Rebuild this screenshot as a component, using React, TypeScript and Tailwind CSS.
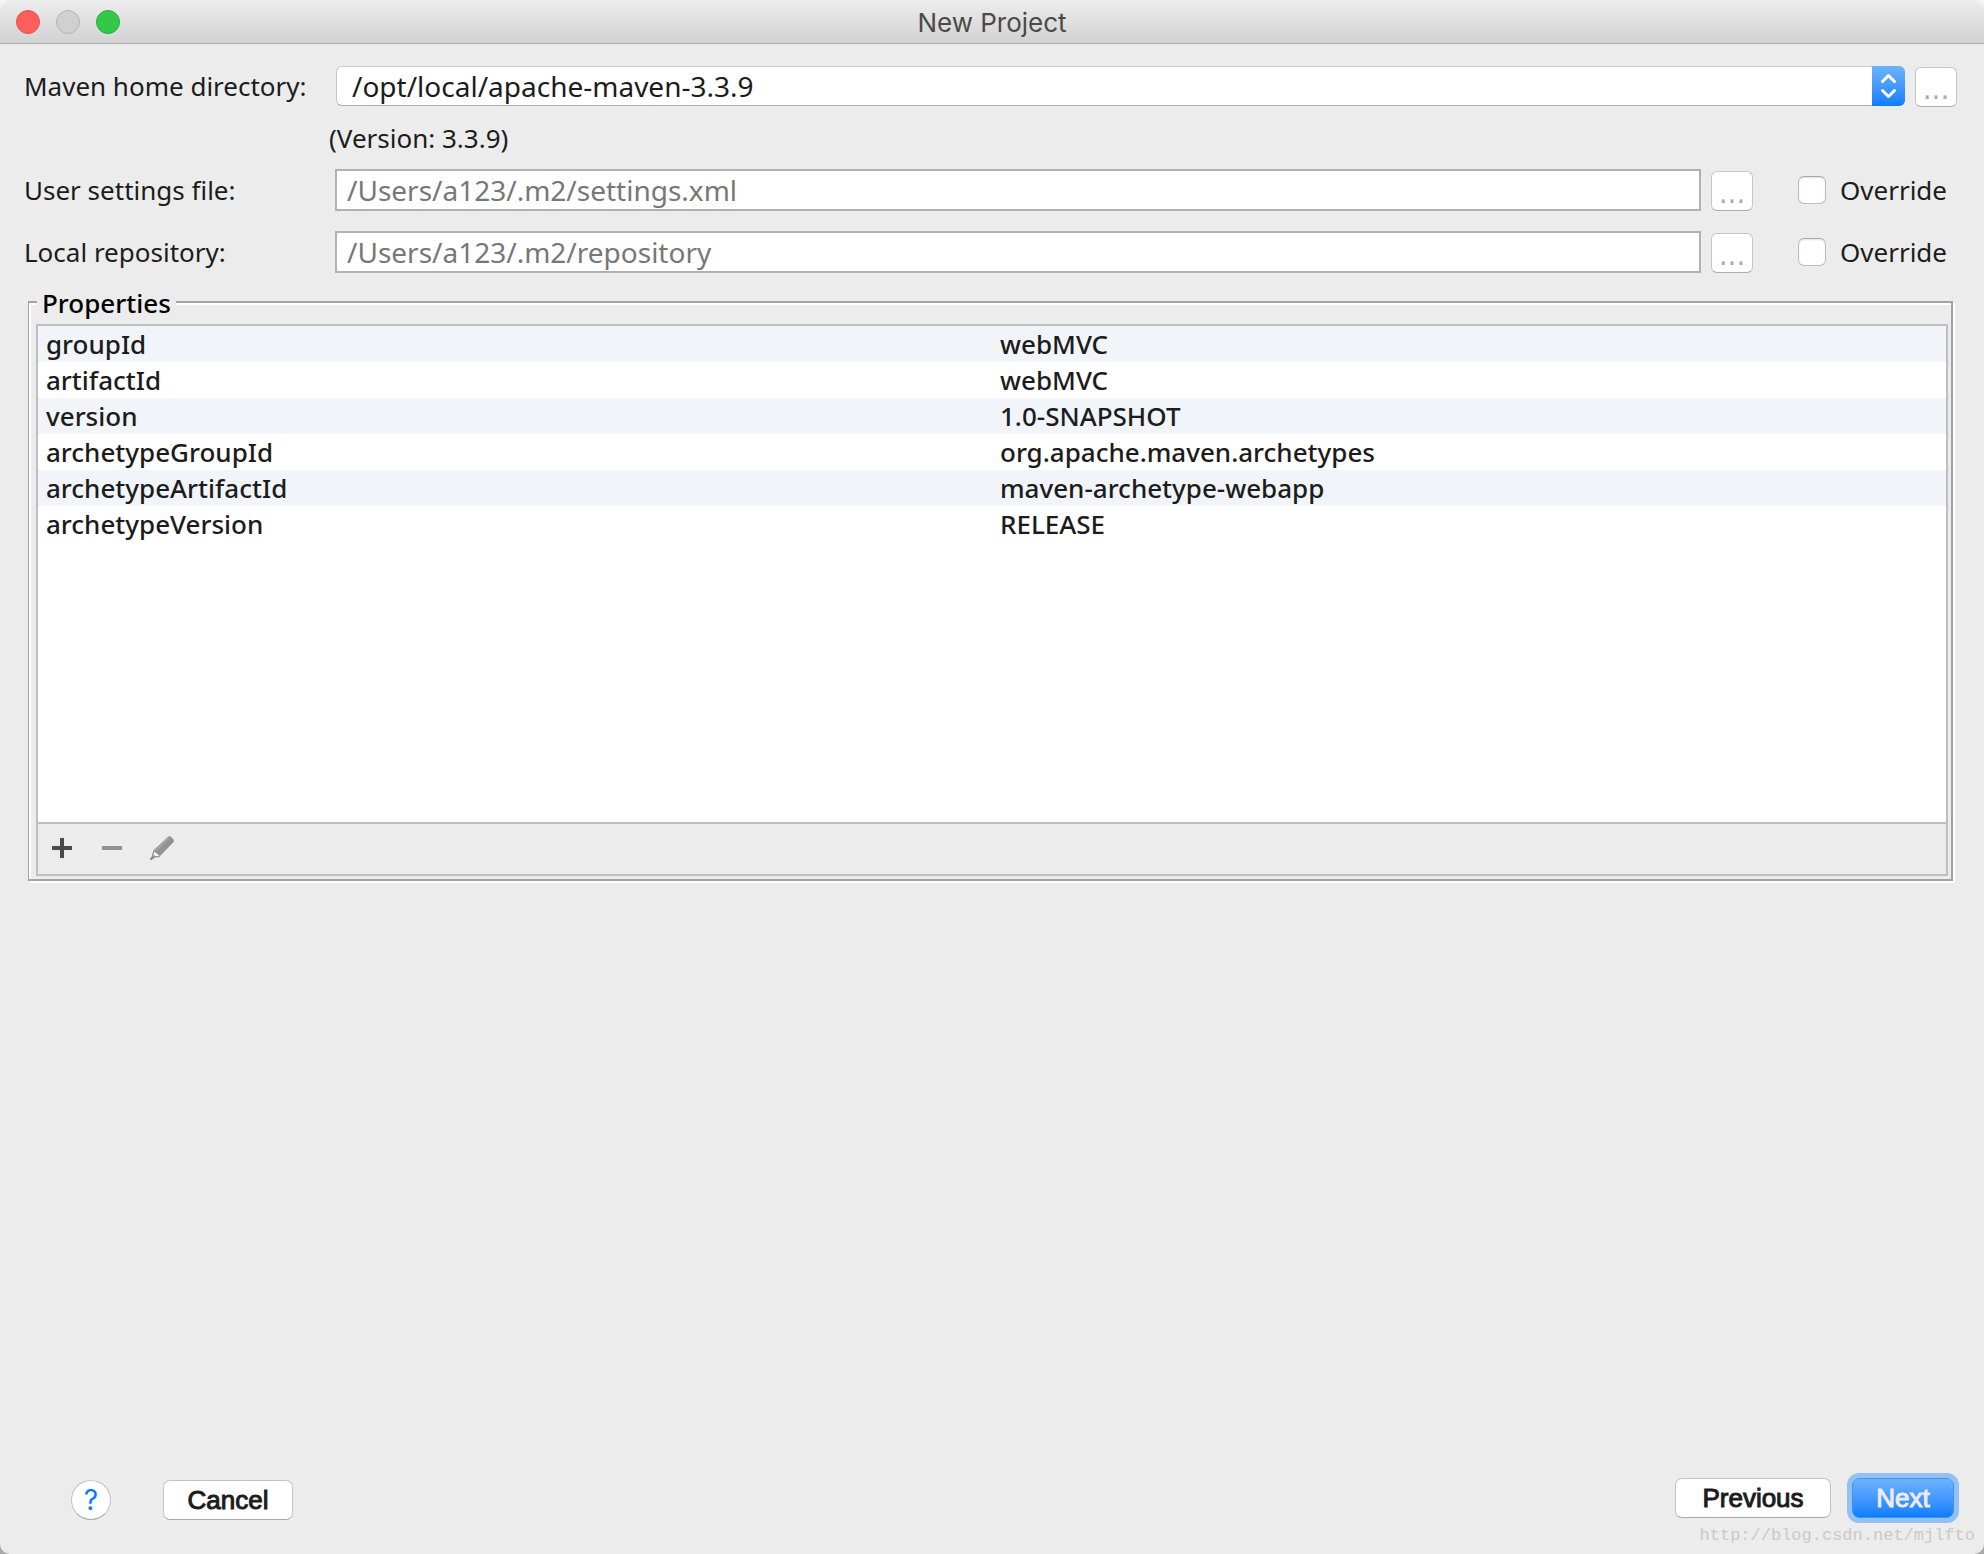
import React from "react";

const properties = [
  { name: "groupId", value: "webMVC" },
  { name: "artifactId", value: "webMVC" },
  { name: "version", value: "1.0-SNAPSHOT" },
  { name: "archetypeGroupId", value: "org.apache.maven.archetypes" },
  { name: "archetypeArtifactId", value: "maven-archetype-webapp" },
  { name: "archetypeVersion", value: "RELEASE" },
];

function TitleBar() {
  return (
    <header className="relative flex h-11 items-center border-b border-[#adadad] bg-linear-to-b from-[#ededed] to-[#d2d2d2] px-4">
      <div className="flex gap-4">
        <button aria-label="Close" className="size-6 rounded-full border border-[#e9504c] bg-[#fd605c]" />
        <button aria-label="Minimize" disabled className="size-6 rounded-full border border-[#b4b4b4] bg-[#d0d0d0]" />
        <button aria-label="Zoom" className="size-6 rounded-full border border-[#27ae38] bg-[#34c84a]" />
      </div>
      <h1 className="pointer-events-none absolute inset-0 flex items-center justify-center pt-0.5 font-['Inter',sans-serif] text-[26px] text-[#4a4a4a]">
        New Project
      </h1>
    </header>
  );
}

function BrowseButton({ label }: { label: string }) {
  return (
    <button
      aria-label={label}
      className="ml-[10px] flex h-10 w-[42px] shrink-0 items-center justify-center self-end rounded-[6px] border border-[#c6c6c6] border-b-[#adadad] bg-white pt-1.5 font-['DejaVu_Sans',sans-serif] text-[28px] leading-none text-[#ababab]"
    >
      ...
    </button>
  );
}

function PathRow({ id, label, value }: { id: string; label: string; value: string }) {
  return (
    <div className="flex h-[42px] items-center">
      <label htmlFor={id} className="w-[311px] shrink-0">
        {label}
      </label>
      <input
        id={id}
        type="text"
        readOnly
        defaultValue={value}
        className="h-[42px] min-w-0 flex-1 border-2 border-[#b1b1b1] bg-white px-[10px] text-[28px] text-[#777777] outline-none"
      />
      <BrowseButton label={`Browse ${label}`} />
      <label className="ml-[45px] flex w-[159px] shrink-0 items-center gap-3.5">
        <input
          type="checkbox"
          className="size-7 appearance-none rounded-[6px] border border-[#bdbdbd] border-t-[#a8a8a8] bg-white shadow-[inset_0_1px_2px_#e2e2e2]"
        />
        Override
      </label>
    </div>
  );
}

function ComboArrows() {
  return (
    <svg viewBox="0 0 33 40" className="h-10 w-[33px]" fill="none" stroke="#fff" strokeWidth="3" strokeLinecap="round" strokeLinejoin="round">
      <path d="M10.5 15.5 16.5 9.5 22.5 15.5" />
      <path d="M10.5 24.5 16.5 30.5 22.5 24.5" />
    </svg>
  );
}

function PencilIcon() {
  return (
    <svg viewBox="0 0 24 24" className="size-6">
      <path d="M17.5 1.2Q19 -.4 21 .8L23.2 3Q24.6 4.8 23.2 6.4L9.6 20.4 3.4 14.6Z" fill="#929292" />
      <path d="M6 14.6 18.6 2" stroke="#a9a9a9" strokeWidth="1.6" fill="none" />
      <path d="M3.6 14.6 2.4 20.8 9.2 20.2 7.4 17.8 5.4 17Z" fill="#f4f4f4" />
      <path d="M4 14.4 2.4 20.8 9.6 20.6" stroke="#8f8f8f" strokeWidth="1.3" fill="none" />
      <path d="M4 19 0 22.2V24H1.6L5.6 21Z" fill="#8f8f8f" />
    </svg>
  );
}

function PropertiesPanel() {
  return (
    <fieldset className="mt-3 mr-[31px] ml-7 border-2 border-l border-[#a2a2a2] pt-[5px] pr-[3px] pb-[3px] pl-[7px] shadow-[2px_2px_0_#fff,inset_2px_2px_0_#fff]">
      <legend className="ml-[1px] bg-[#ececec] px-[5px] pt-0.5 leading-8 font-medium text-black">Properties</legend>
      <div className="border-2 border-[#bfbfbf]">
        <div className="min-h-[496px] bg-white">
          <table className="w-full table-fixed border-collapse text-left font-medium">
            <tbody>
              {properties.map((p) => (
                <tr key={p.name} className="h-9 odd:bg-[#f1f5fa]">
                  <th scope="row" className="w-1/2 py-0 pr-0 pl-2 leading-9 font-medium">
                    {p.name}
                  </th>
                  <td className="py-0 pr-0 pl-2 leading-9">{p.value}</td>
                </tr>
              ))}
            </tbody>
          </table>
        </div>
        <div className="flex h-[52px] items-center gap-[26px] border-t-2 border-[#bfbfbf] px-3 pb-0.5">
          <button aria-label="Add" className="flex size-6 items-center justify-center">
            <svg viewBox="0 0 20 20" className="size-5">
              <path d="M8 0h4v8h8v4h-8v8H8v-8H0V8h8z" fill="#494949" />
            </svg>
          </button>
          <button aria-label="Remove" disabled className="flex size-6 items-center justify-center">
            <svg viewBox="0 0 20 20" className="size-5">
              <path d="M0 8h20v4H0z" fill="#909090" />
            </svg>
          </button>
          <button aria-label="Edit" disabled className="flex size-6 items-center justify-center">
            <PencilIcon />
          </button>
        </div>
      </div>
    </fieldset>
  );
}

function Footer() {
  return (
    <footer className="mt-auto pb-2">
      <div className="flex items-start justify-between pr-[30px] pl-[71px] font-['Liberation_Sans',Arial,sans-serif]">
        <div className="flex gap-[52px] pt-0.5">
          <button
            aria-label="Help"
            className="flex size-10 items-center justify-center rounded-full border border-[#c3c3c3] border-b-[#a9a9a9] bg-white font-['Inter',sans-serif] text-[28px] leading-none text-[#0a7bff]"
          >
            ?
          </button>
          <button className="h-10 w-[130px] rounded-[7px] border border-[#c3c3c3] border-b-[#a9a9a9] bg-white leading-none [-webkit-text-stroke:1px]">
            Cancel
          </button>
        </div>
        <div className="flex gap-[21px]">
          <button className="h-10 w-[156px] rounded-[7px] border border-[#c3c3c3] border-b-[#a9a9a9] bg-white leading-none [-webkit-text-stroke:1px]">
            Previous
          </button>
          <button className="h-10 w-[102px] rounded-[7px] border border-[#3b93f5] bg-linear-to-b from-[#6cb3fa] to-[#087dff] leading-none text-[#ececec] ring-[5px] ring-[#94c1f2] [-webkit-text-stroke:1px]">
            Next
          </button>
        </div>
      </div>
      <p className="mt-1.5 pr-[9px] text-right font-['Liberation_Mono',monospace] text-[17px] leading-5 text-[#cacac5]">
        http://blog.csdn.net/mjlfto
      </p>
    </footer>
  );
}

export default function App() {
  return (
    <div className="min-h-screen bg-linear-to-b from-[#f4f4f4] to-[#a8a8a8]">
      <div className="flex min-h-screen flex-col overflow-hidden rounded-[10px] bg-[#ececec] font-['Noto_Sans',sans-serif] text-[26px] leading-[34px] text-[#1c1c1c]">
        <TitleBar />
        <main className="pt-[21px]">
          <div className="pr-[27px] pl-6">
            <div className="flex h-[42px] items-center">
              <label htmlFor="maven-home" className="w-[312px] shrink-0">
                Maven home directory:
              </label>
              <div className="relative min-w-0 flex-1">
                <select
                  id="maven-home"
                  className="block h-10 w-full appearance-none rounded-[6px] border border-[#c6c6c6] border-b-[#adadad] bg-white pr-10 pl-[15px] text-[28px] leading-[38px] outline-none"
                >
                  <option>/opt/local/apache-maven-3.3.9</option>
                </select>
                <span className="pointer-events-none absolute top-0 right-0 h-10 w-[33px] rounded-r-[6px] bg-linear-to-b from-[#6cb3fa] to-[#087dff]">
                  <ComboArrows />
                </span>
              </div>
              <BrowseButton label="Browse Maven home directory" />
            </div>
            <p className="flex h-[62px] items-center pl-[305px]">(Version: 3.3.9)</p>
            <div className="flex flex-col gap-5">
              <PathRow id="user-settings" label="User settings file:" value="/Users/a123/.m2/settings.xml" />
              <PathRow id="local-repository" label="Local repository:" value="/Users/a123/.m2/repository" />
            </div>
          </div>
          <PropertiesPanel />
        </main>
        <Footer />
      </div>
    </div>
  );
}
